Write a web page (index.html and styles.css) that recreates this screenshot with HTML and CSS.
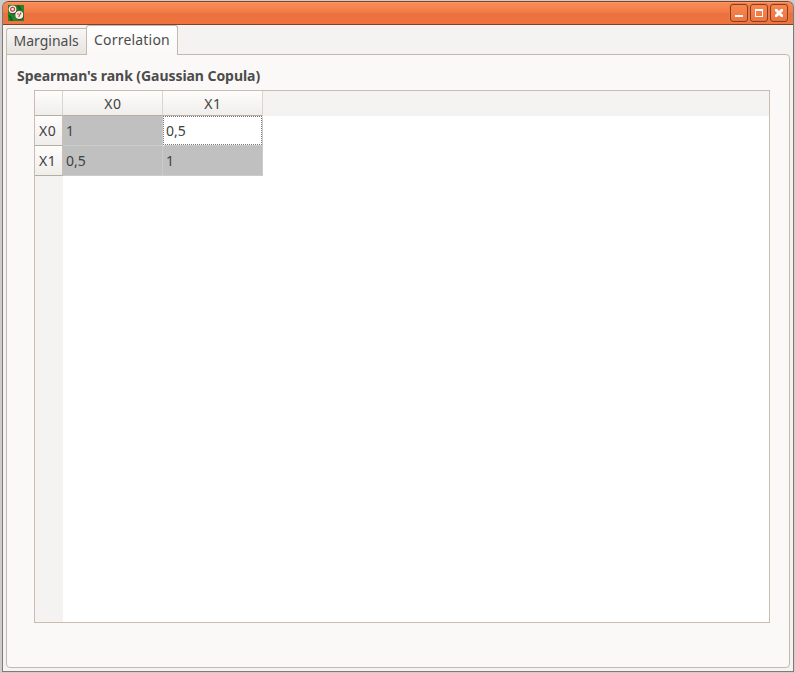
FILE: index.html
```
<!DOCTYPE html>
<html lang="en">
<head>
<meta charset="utf-8">
<title>Correlation</title>
<link rel="stylesheet" href="styles.css">
</head>
<body>
<div class="window">
  <header class="titlebar">
    <svg class="app-icon" width="16" height="16" viewBox="0 0 16 16">
      <rect width="16" height="16" fill="#27822b"/>
      <path d="M0 10l3 1 2 5H3zM9 0h2l3 5-3 0z" fill="#165c1c"/>
      <circle cx="5.2" cy="5" r="4.2" fill="#302b22"/>
      <circle cx="4.6" cy="4.3" r="3.9" fill="#f2eddf"/>
      <circle cx="4.6" cy="4.3" r="1.9" fill="#fff" stroke="#c33b32" stroke-width="1.2"/>
      <circle cx="11.8" cy="10.6" r="4.2" fill="#302b22"/>
      <circle cx="11.3" cy="9.9" r="4" fill="#f2eddf"/>
      <path d="M9.5 8.5l1 1M13 7.5l-2.3 4.5" fill="none" stroke="#c33b32" stroke-width="1.1"/>
    </svg>
    <div class="controls">
      <button class="control" aria-label="Minimize"><svg width="16" height="16"><path d="M4 10h8v2H4z"/></svg></button>
      <button class="control" aria-label="Maximize"><svg width="16" height="16"><path fill-rule="evenodd" d="M4 4h8v8H4zM5 6v5h6V6z"/></svg></button>
      <button class="control" aria-label="Close"><svg width="16" height="16"><path d="M4 4h2l2 2 2-2h2v2l-2 2 2 2v2h-2l-2-2-2 2H4v-2l2-2-2-2z"/></svg></button>
    </div>
  </header>
  <main class="content">
    <nav class="tabs">
      <div class="tab"><span>Marginals</span></div>
      <div class="tab active"><span>Correlation</span></div>
    </nav>
    <section class="pane">
      <h1 class="title">Spearman's rank (Gaussian Copula)</h1>
      <div class="view">
        <div class="grid">
          <div class="head"></div><div class="head">X0</div><div class="head">X1</div><div class="head-space"></div>
          <div class="head side">X0</div><div class="cell">1</div><div class="cell current">0,5</div><div></div>
          <div class="head side">X1</div><div class="cell">0,5</div><div class="cell">1</div><div></div>
          <div class="side-space"></div>
        </div>
      </div>
    </section>
  </main>
</div>
</body>
</html>
```

FILE: styles.css
```
* { box-sizing: border-box; }
body {
  margin: 0;
  height: 673px;
  padding: 1px 1px 1px 2px;
  background: #cfcdcb;
  color: #4c4c4c;
  font: 14px/18px "Noto Sans", "Open Sans", sans-serif;
  overflow: hidden;
}
.window {
  height: 671px;
  display: flex;
  flex-direction: column;
  border: 1px solid #7d7a77;
  border-top: 0;
  border-radius: 6px 6px 0 0;
  background: #f4f3f2;
  overflow: hidden;
}
.titlebar {
  flex: none;
  height: 24px;
  margin: 0 -1px;
  padding: 2px 5px 0 5px;
  display: flex;
  justify-content: space-between;
  border: 1px solid #84401f;
  border-radius: 6px 6px 0 0;
  background: linear-gradient(#fa9a69 0 1px, #fb8a56 1px, #f07a46 50%, #e9703d 50%, #f0743f);
}
.app-icon { margin-top: 1px; }
.controls { display: flex; gap: 2px; }
.control {
  width: 18px;
  height: 18px;
  padding: 0;
  border: 1px solid #84401f;
  border-radius: 3px;
  background: linear-gradient(#fa8650, #ed7440);
  box-shadow: 0 0 0 1px #ee7a49;
}
.control svg { display: block; fill: #fff; }
.content {
  flex: 1;
  display: flex;
  flex-direction: column;
  padding: 0 3px 3px;
}
.tabs {
  display: flex;
  align-items: flex-end;
  height: 30px;
  margin-bottom: -1px;
  z-index: 1;
}
.tab {
  height: 27px;
  width: 80px;
  padding: 3px 0 0 6.5px;
  border: 1px solid #c4b9ae;
  border-right: 0;
  border-radius: 3px 0 0 0;
  background: linear-gradient(#f8f7f6, #e7e3df);
  white-space: nowrap;
}
.tab.active {
  width: 92px;
  height: 30px;
  padding: 5px 0 0 7px;
  border-right: 1px solid #c4b9ae;
  border-bottom: 0;
  border-radius: 3px 3px 0 0;
  background: linear-gradient(#fff, #faf9f7);
  letter-spacing: .2px;
}
.pane {
  flex: 1;
  padding: 12px 19px 44px 10px;
  border: 1px solid #c4b9ae;
  border-radius: 0 4px 4px 4px;
  background: #faf9f7;
  display: flex;
  flex-direction: column;
}
.title {
  margin: 0 0 5px;
  font-size: 14px;
  line-height: 18px;
  font-weight: 700;
  letter-spacing: -.06px;
}
.view {
  flex: 1;
  margin-left: 17px;
  border: 1px solid #c9bdb1;
  background: #fff;
  color: #414141;
}
.grid {
  height: 100%;
  display: grid;
  grid-template: 25px 30px 30px 1fr / 28px 100px 100px 1fr;
}
.head {
  padding-left: 1px;
  border-right: 1px solid #ddd5cd;
  border-bottom: 1px solid #b5aca2;
  background: linear-gradient(#fdfdfc, #f0eeeb);
  text-align: center;
  line-height: 26px;
  letter-spacing: .6px;
}
.side {
  padding-left: 4px;
  border-right-color: #c9c0b7;
  line-height: 30px;
  text-align: left;
}
.head-space, .side-space { background: #f4f3f2; }
.cell {
  padding-left: 3px;
  border-right: 1px solid #cbcbcb;
  border-bottom: 1px solid #cbcbcb;
  background: #c0c0c0;
  line-height: 30px;
}
.current {
  margin: 0 1px 1px 0;
  padding-left: 2px;
  border: 1px dotted #777;
  background: #fff;
  box-shadow: 1px 1px #cbcbcb;
  line-height: 28px;
}
```
